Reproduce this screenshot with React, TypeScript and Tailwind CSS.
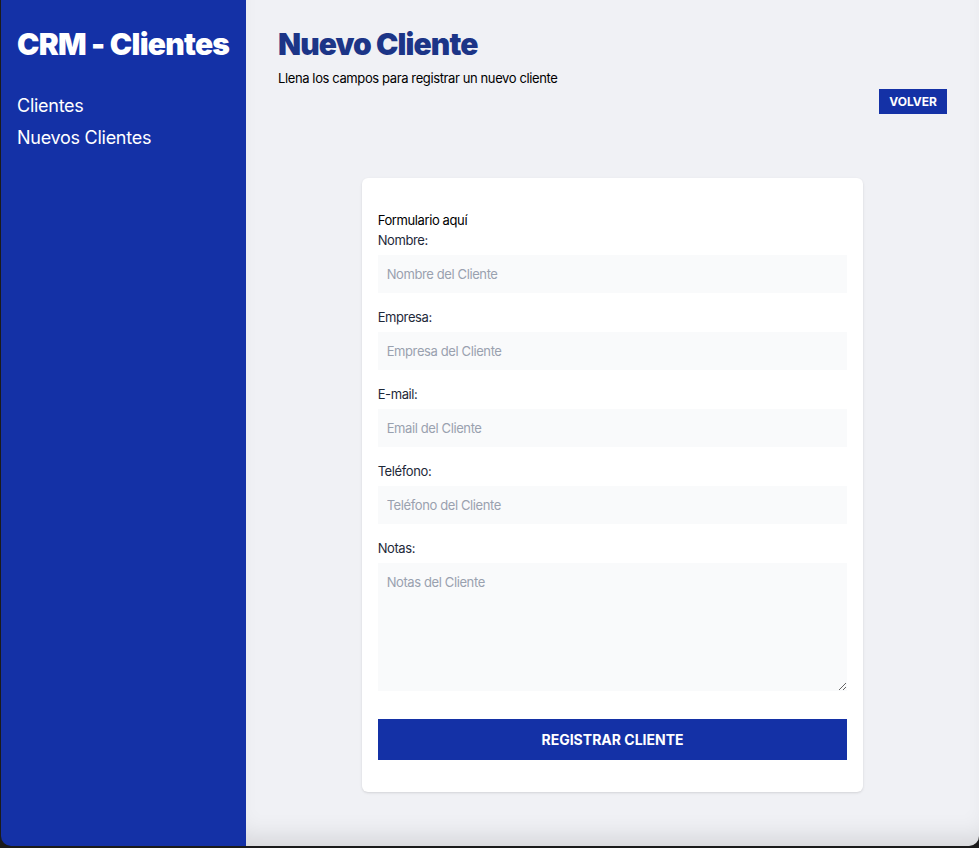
import React from "react";

const campos = [
  { id: "nombre", label: "Nombre:", placeholder: "Nombre del Cliente" },
  { id: "empresa", label: "Empresa:", placeholder: "Empresa del Cliente" },
  { id: "email", label: "E-mail:", placeholder: "Email del Cliente" },
  { id: "telefono", label: "Teléfono:", placeholder: "Teléfono del Cliente" },
];

const App = () => {
  return (
    <div className="h-[848px] bg-[#1b1b1b] pl-px pb-[2px] font-['Inter',sans-serif]">
      <div className="flex h-full overflow-hidden rounded-b-[10px]">
        {/* Sidebar */}
        <aside className="w-[245px] shrink-0 bg-[#1431a6] px-4 pt-[26px]">
          <h2 className="whitespace-nowrap text-3xl font-black tracking-[-0.025em] text-white">
            CRM - Clientes
          </h2>
          <nav className="mt-[30px] flex flex-col gap-1">
            <a href="#" className="text-lg tracking-[-0.015em] text-white">
              Clientes
            </a>
            <a href="#" className="text-lg tracking-[-0.015em] text-white">
              Nuevos Clientes
            </a>
          </nav>
        </aside>

        {/* Main */}
        <main className="flex-1 bg-[#f0f1f5] px-8 pt-[26px] shadow-[inset_0_-22px_26px_-14px_rgba(0,0,0,0.12)]">
          <h1 className="text-3xl font-black tracking-[-0.03em] text-[#1c3587]">Nuevo Cliente</h1>
          <p className="mt-1.5 text-[13px] leading-5 tracking-[-0.03em] text-black">
            Llena los campos para registrar un nuevo cliente
          </p>
          <div className="flex justify-end">
            <button className="mt-px h-[25px] bg-[#1431a6] px-[10px] text-xs font-bold uppercase text-white">
              Volver
            </button>
          </div>

          <div className="mx-auto mt-16 w-3/4 rounded-md bg-white px-4 py-8 shadow">
            <p className="text-[13px] leading-5 tracking-[-0.03em] text-black">Formulario aquí</p>
            <form>
              {campos.map((campo) => (
                <div key={campo.id} className="mb-[14px]">
                  <label
                    htmlFor={campo.id}
                    className="block text-[13px] leading-5 tracking-[-0.03em] text-gray-800"
                  >
                    {campo.label}
                  </label>
                  <input
                    id={campo.id}
                    type="text"
                    placeholder={campo.placeholder}
                    className="mt-[5px] block h-[38px] w-full bg-gray-50 px-[9px] text-[13px] tracking-[-0.03em] placeholder:text-gray-400"
                  />
                </div>
              ))}
              <div>
                <label
                  htmlFor="notas"
                  className="block text-[13px] leading-5 tracking-[-0.03em] text-gray-800"
                >
                  Notas:
                </label>
                <textarea
                  id="notas"
                  placeholder="Notas del Cliente"
                  className="mt-[5px] block h-[128px] w-full bg-gray-50 p-[9px] text-[13px] leading-5 tracking-[-0.03em] placeholder:text-gray-400"
                />
              </div>
              <button
                type="button"
                className="mt-[28px] h-[41px] w-full bg-[#1431a6] text-sm font-bold uppercase text-white"
              >
                Registrar Cliente
              </button>
            </form>
          </div>
        </main>
      </div>
    </div>
  );
};

export default App;
